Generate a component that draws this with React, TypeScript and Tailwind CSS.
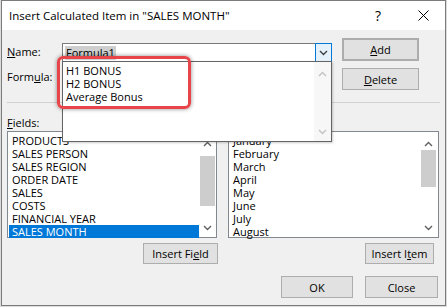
import React from "react";

const F = "font-['Open_Sans','Noto_Sans',sans-serif]";

function Chevron({ up, color = "#606060" }: { up?: boolean; color?: string }) {
  return (
    <svg width="9" height="6" viewBox="0 0 9 6">
      <path
        d={up ? "M1 5 L4.5 1.5 L8 5" : "M1 1 L4.5 4.5 L8 1"}
        fill="none"
        stroke={color}
        strokeWidth="1.4"
      />
    </svg>
  );
}

function Btn({ children, className = "" }: { children: React.ReactNode; className?: string }) {
  return (
    <div
      className={
        "flex items-center justify-center bg-[#e1e1e1] border border-[#adadad] text-[11px] text-black leading-none " +
        className
      }
    >
      {children}
    </div>
  );
}

const fields = [
  "PRODUCTS",
  "SALES PERSON",
  "SALES REGION",
  "ORDER DATE",
  "SALES",
  "COSTS",
  "FINANCIAL YEAR",
  "SALES MONTH",
];
const items = ["January", "February", "March", "April", "May", "June", "July", "August"];

export default function App() {
  return (
    <div className={"relative w-[447px] h-[307px] bg-[#dcdcdc] overflow-hidden " + F}>
      <div className="ml-[1px] w-[445px] h-[306px] border border-[#7b7b7b] flex flex-col bg-[#f0f0f0]">
        {/* title bar */}
        <div className="h-[29px] bg-white flex items-center pl-[7px] text-[11.5px] text-black">
          <span className="mt-[1px]">Insert Calculated Item in "SALES MONTH"</span>
          <span className="ml-auto mr-[37px] text-[14px]">?</span>
          <svg width="11" height="11" viewBox="0 0 11 11" className="mr-[16px]">
            <path d="M0.5 0.5 L10.5 10.5 M10.5 0.5 L0.5 10.5" stroke="#000" strokeWidth="1" />
          </svg>
        </div>
        {/* body */}
        <div className="flex-1 pl-[5px] text-[11px] text-black">
          {/* row 1 */}
          <div className="flex items-start mt-[8px] h-[22px]">
            <div className="w-[55px] mt-[6px] leading-[16px]">
              <span className="underline">N</span>ame:
            </div>
            <div className="w-[270px] h-[19px] mt-[5px] bg-white border border-[#7a7a7a] flex items-center">
              <span className="ml-[2px] px-[1px] bg-[#cfcfcf] leading-[14px]">Formula1</span>
              <div className="ml-auto w-[17px] h-[19px] -mr-[1px] bg-[#e5f1fb] border border-[#0078d7] flex items-center justify-center">
                <Chevron color="#404040" />
              </div>
            </div>
            <Btn className="ml-[10px] w-[77px] h-[23px] border-2 border-[#0078d7]">
              <span>
                <span className="underline">A</span>dd
              </span>
            </Btn>
          </div>
          {/* row 2 */}
          <div className="flex items-start mt-[8px] h-[22px]">
            <div className="w-[335px] mt-[1px] leading-[16px]">
              Form<span className="underline">u</span>la:
            </div>
            <Btn className="w-[77px] h-[22px]">
              <span>
                <span className="underline">D</span>elete
              </span>
            </Btn>
          </div>
          {/* separator */}
          <div className="mt-[12px] w-[433px] border-t border-[#d0d0d0]" />
          {/* fields label */}
          <div className="mt-[12px] leading-[16px]">
            <span className="underline">F</span>ields:
          </div>
          {/* lists */}
          <div className="flex gap-[11px]">
            <div className="relative w-[210px] h-[107px] bg-white border border-[#828790] pt-[2px] pl-[1px] pr-[17px]">
              {fields.map((f, i) => (
                <div
                  key={f}
                  className={
                    "h-[13px] leading-[13px] pl-[3px] whitespace-nowrap " +
                    (i === fields.length - 1 ? "bg-[#0078d7] text-white" : "")
                  }
                >
                  {f}
                </div>
              ))}
              <div className="absolute right-0 top-0 w-[17px] h-[105px] flex flex-col items-center">
                <div className="h-[17px] flex items-center justify-center mt-[3px]">
                  <Chevron up />
                </div>
                <div className="w-[15px] h-[50px] bg-[#cdcdcd] mt-[4px]" />
                <div className="mt-auto h-[17px] flex items-center justify-center mb-[1px]">
                  <Chevron />
                </div>
              </div>
            </div>
            <div className="relative w-[211px] h-[107px] bg-white border border-[#828790] pt-[2px] pl-[1px] pr-[17px]">
              {items.map((f) => (
                <div key={f} className="h-[13px] leading-[13px] pl-[3px] whitespace-nowrap">
                  {f}
                </div>
              ))}
              <div className="absolute right-[1px] top-0 w-[17px] h-[105px] flex flex-col items-center">
                <div className="h-[17px] flex items-center justify-center mt-[3px]">
                  <Chevron up />
                </div>
                <div className="w-[15px] h-[37px] bg-[#cdcdcd] -mt-[2px]" />
                <div className="mt-auto h-[17px] flex items-center justify-center mb-[1px]">
                  <Chevron />
                </div>
              </div>
            </div>
          </div>
          {/* insert buttons */}
          <div className="flex mt-[5px]">
            <Btn className="ml-[136px] w-[75px] h-[21px]">
              <span>
                Insert Fi<span className="underline">e</span>ld
              </span>
            </Btn>
            <Btn className="ml-[147px] w-[69px] h-[21px]">
              <span>
                Insert I<span className="underline">t</span>em
              </span>
            </Btn>
          </div>
          {/* ok close */}
          <div className="flex mt-[12px] gap-[12px]">
            <Btn className="ml-[274px] w-[72px] h-[22px]">OK</Btn>
            <Btn className="w-[73px] h-[22px]">Close</Btn>
          </div>
        </div>
      </div>

      {/* dropdown popup */}
      <div className="absolute left-[62px] top-[61px] w-[270px] h-[81px] bg-white border border-[#646464] text-[11px] text-black shadow-[1px_1px_2px_rgba(0,0,0,0.2)]">
        <div className="pt-[2px] pl-[3px]">
          <div className="h-[13px] leading-[13px]">H1 BONUS</div>
          <div className="h-[13px] leading-[13px]">H2 BONUS</div>
          <div className="h-[13px] leading-[13px]">Average Bonus</div>
        </div>
        <div className="absolute right-0 top-0 w-[17px] h-[79px] bg-[#f7f7f7] flex flex-col items-center">
          <div className="h-[17px] flex items-center justify-center mt-[3px]">
            <Chevron up color="#c2c2c2" />
          </div>
          <div className="mt-auto h-[17px] flex items-center justify-center mb-[1px]">
            <Chevron color="#c2c2c2" />
          </div>
        </div>
      </div>

      {/* red highlight */}
      <div className="absolute left-[57px] top-[56px] w-[134px] h-[53px] rounded-[6px] border-[3px] border-[#e8454b] shadow-[0_0_4px_rgba(0,0,0,0.45)]" />
    </div>
  );
}
